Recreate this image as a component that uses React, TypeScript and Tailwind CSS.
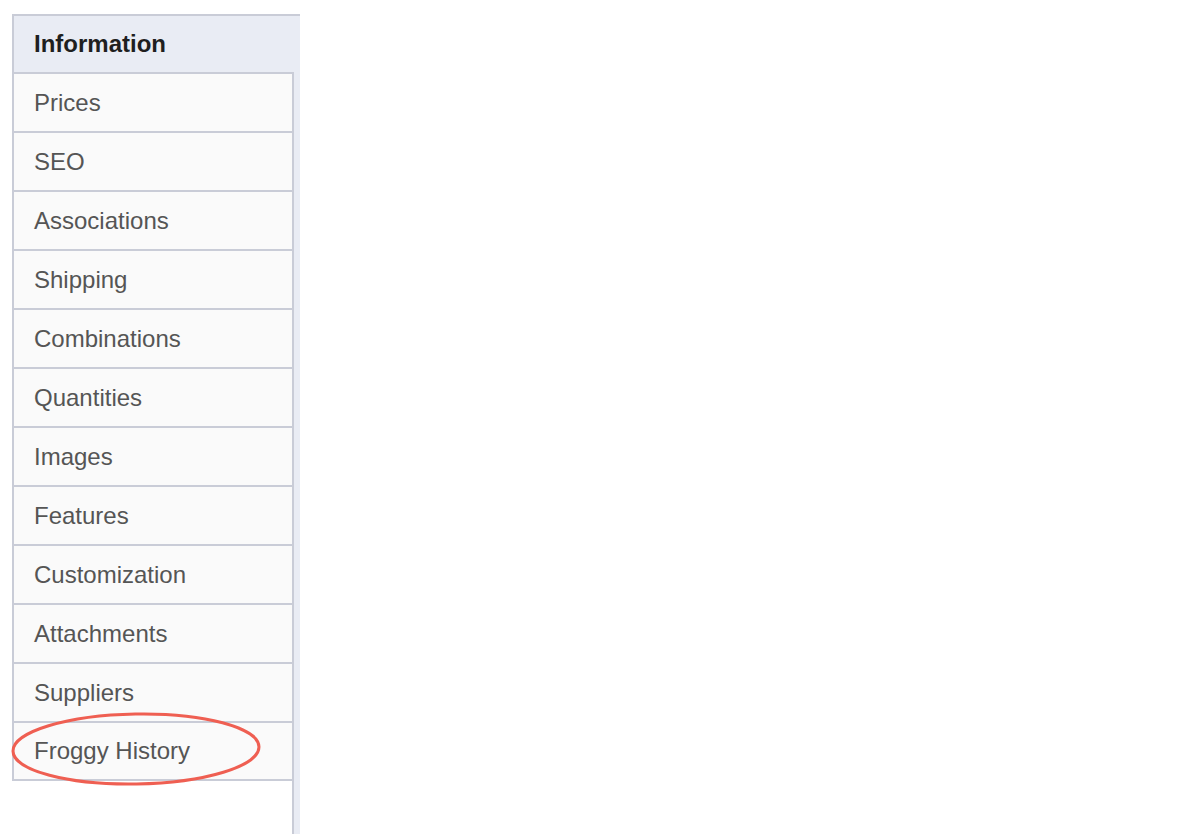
import React from "react";

const items = [
  "Prices",
  "SEO",
  "Associations",
  "Shipping",
  "Combinations",
  "Quantities",
  "Images",
  "Features",
  "Customization",
  "Attachments",
  "Suppliers",
  "Froggy History",
];

export default function App() {
  return (
    <div
      className="relative h-[834px] w-[1200px] overflow-hidden bg-white pl-[12px] pt-[14px]"
      style={{ fontFamily: '"Liberation Sans", Arial, Helvetica, sans-serif' }}
    >
      <div className="flex h-[820px] w-[288px] flex-col border-t-2 border-[#c9ccd7] bg-[#e9ecf4]">
        <div className="flex h-[56px] items-center border-l-2 border-[#c9ccd7] pl-[20px] text-[24px] font-bold text-[#1f1f1f]">
          Information
        </div>
        <div className="mr-[6px] flex-1 border-r-2 border-[#c9ccd7] bg-white">
          {items.map((label, i) => (
            <div
              key={label}
              className={
                i === items.length - 1
                  ? "flex h-[60px] items-center border-y-2 border-l-2 border-[#c9ccd7] bg-[#fafafa] pl-[20px] text-[24px] text-[#555]"
                  : "flex h-[59px] items-center border-t-2 border-l-2 border-[#c9ccd7] bg-[#fafafa] pl-[20px] text-[24px] text-[#555]"
              }
            >
              {label}
            </div>
          ))}
        </div>
      </div>
      <svg
        className="pointer-events-none absolute left-0 top-0"
        width="300"
        height="834"
        viewBox="0 0 300 834"
      >
        <ellipse
          cx="136"
          cy="749"
          rx="123"
          ry="35"
          fill="none"
          stroke="#ef5f52"
          strokeWidth="3"
          transform="rotate(-1 136 749)"
        />
      </svg>
    </div>
  );
}
